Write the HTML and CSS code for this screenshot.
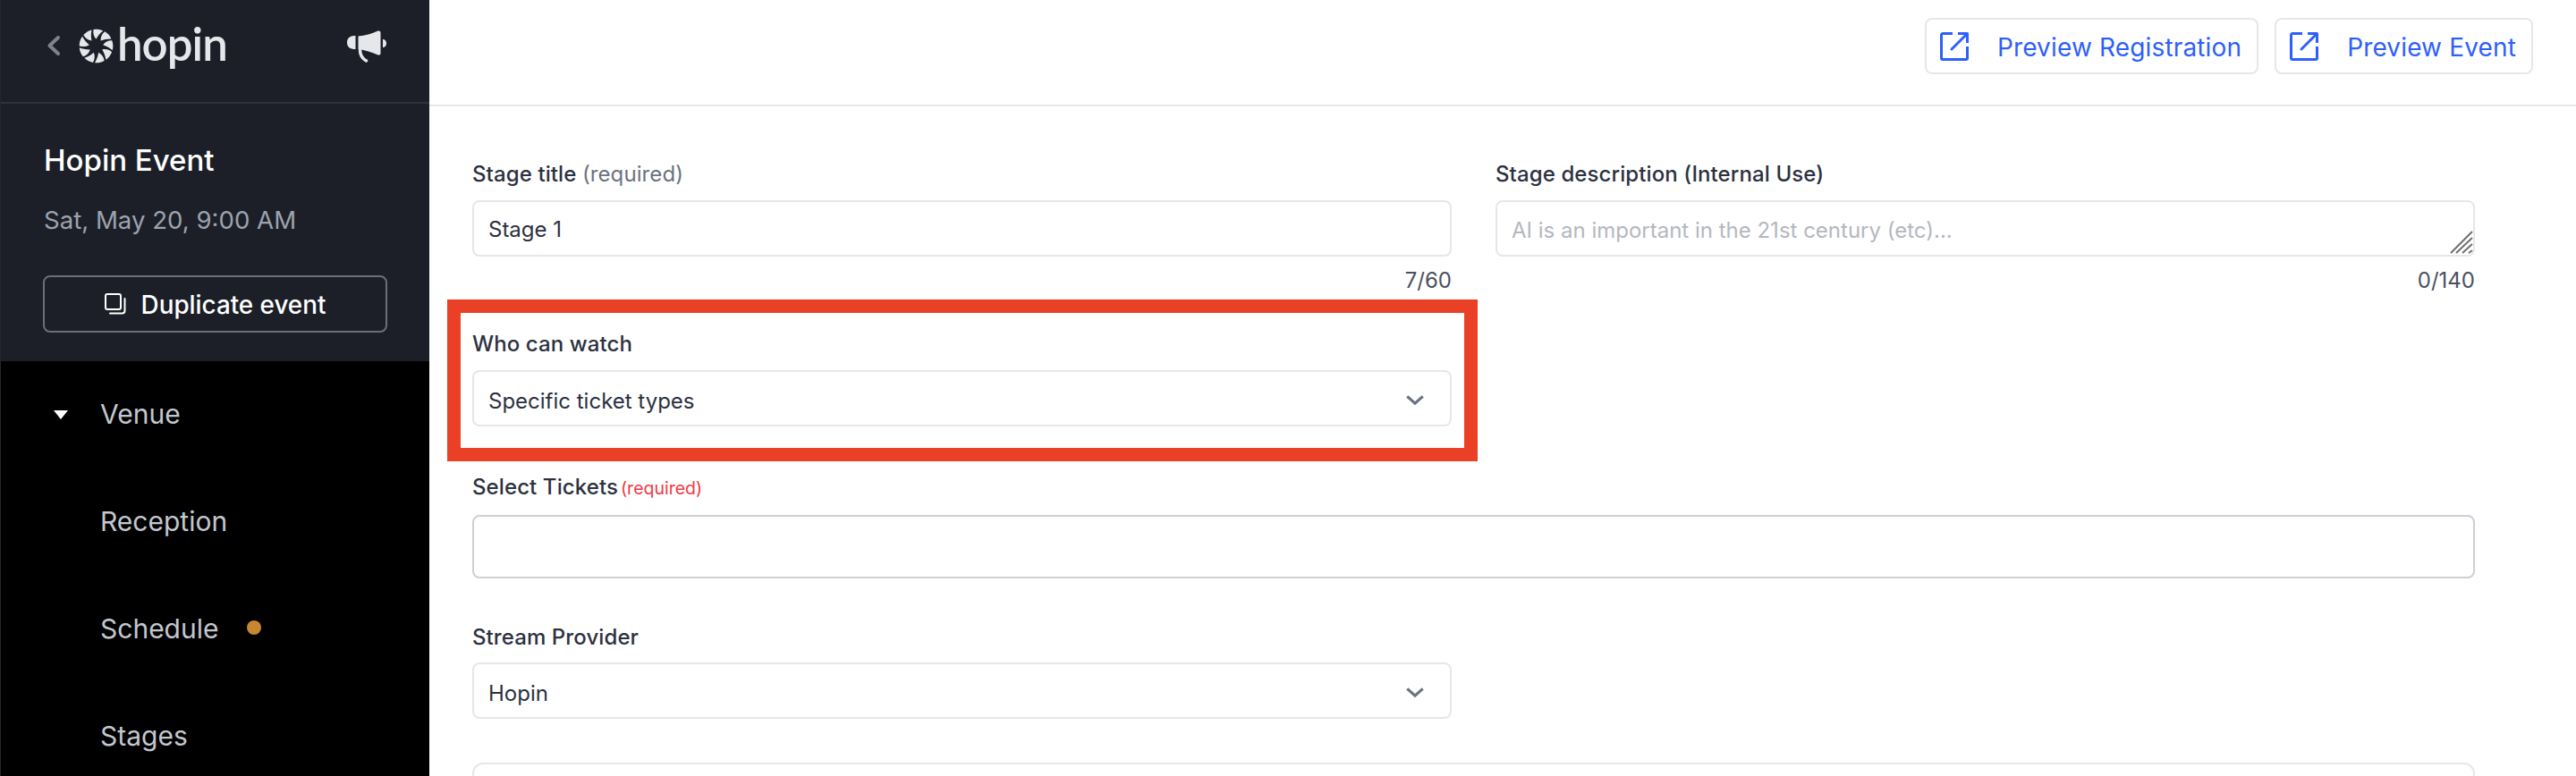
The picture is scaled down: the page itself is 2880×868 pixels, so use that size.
FILE: index.html
```html
<!DOCTYPE html>
<html lang="en">
<head>
<meta charset="utf-8">
<title>Hopin Event - Stage</title>
<link rel="stylesheet" href="styles.css">
</head>
<body>
<div class="app">
  <aside class="sidebar">
    <div class="sidebar-head">
      <div class="brand">
        <svg class="back" viewBox="0 0 16 24" width="16" height="24"><path d="M13 3 3.5 12 13 21" fill="none" stroke="#7f828e" stroke-width="4" stroke-linecap="round" stroke-linejoin="round"/></svg>
        <svg class="swirl" viewBox="0 0 40 40" width="39" height="39">
          <defs><path id="blade" d="M20 12C17.300 9 16 5 17 .9 21 .3 24.800.8 28 2.500 25 4.800 22 8.200 20 12Z"/></defs>
          <g fill="#e5e7eb">
            <use href="#blade"/>
            <use href="#blade" transform="rotate(40 20 20)"/>
            <use href="#blade" transform="rotate(80 20 20)"/>
            <use href="#blade" transform="rotate(120 20 20)"/>
            <use href="#blade" transform="rotate(160 20 20)"/>
            <use href="#blade" transform="rotate(200 20 20)"/>
            <use href="#blade" transform="rotate(240 20 20)"/>
            <use href="#blade" transform="rotate(280 20 20)"/>
            <use href="#blade" transform="rotate(320 20 20)"/>
          </g>
        </svg>
        <span class="wordmark">hopin</span>
        <svg class="horn" viewBox="0 0 44 36" width="44" height="36" fill="#e5e7eb">
          <path d="M9.500 6C3 6 0 8.500 0 13.500S3 21 9.500 21Z"/>
          <path d="M12.500 6.500C20 6 28 3.500 34 .8 36 0 37.500 .8 37.500 2.500V25.500C37.500 27.500 36 28 34 27.200 28 24.500 20 22 12.500 21Z"/>
          <path d="M40 10C43 10 44 12.500 44 14.500S43 19 40 19Z"/>
          <path d="M14.500 22C14.500 28 18 32 21.500 34" fill="none" stroke="#e5e7eb" stroke-width="3.500" stroke-linecap="round"/>
        </svg>
      </div>
      <div class="event">
        <div class="event-name">Hopin Event</div>
        <div class="event-date">Sat, May 20, 9:00 AM</div>
        <div class="dup-btn">
          <svg viewBox="0 0 24 24" width="24" height="24" fill="none" stroke="#fff" stroke-width="2"><rect x="1" y="1" width="17" height="17" rx="2"/><path d="M22.500 6V19.500A3 3 0 0 1 19.500 22.500H6" stroke-linecap="round"/></svg>
          <span>Duplicate event</span>
        </div>
      </div>
    </div>
    <nav class="nav">
      <div class="nav-row"><span class="caret"></span><span>Venue</span></div>
      <div class="nav-row"><span>Reception</span></div>
      <div class="nav-row"><span>Schedule</span><span class="dot"></span></div>
      <div class="nav-row"><span>Stages</span></div>
    </nav>
  </aside>
  <main class="main">
    <header class="topbar">
      <div class="preview-btn">
        <svg viewBox="0 0 32 32" width="32" height="32" fill="none" stroke="#2f5ffb" stroke-width="3"><path d="M14 1.500H3A1.500 1.500 0 0 0 1.500 3V29A1.500 1.500 0 0 0 3 30.500H29A1.500 1.500 0 0 0 30.500 29V16M20 1.500H30.500V12" stroke-linejoin="round"/><path d="M29.500 2.500 13 19" stroke-linecap="round"/></svg>
        <span>Preview Registration</span>
      </div>
      <div class="preview-btn">
        <svg viewBox="0 0 32 32" width="32" height="32" fill="none" stroke="#2f5ffb" stroke-width="3"><path d="M14 1.500H3A1.500 1.500 0 0 0 1.500 3V29A1.500 1.500 0 0 0 3 30.500H29A1.500 1.500 0 0 0 30.500 29V16M20 1.500H30.500V12" stroke-linejoin="round"/><path d="M29.500 2.500 13 19" stroke-linecap="round"/></svg>
        <span>Preview Event</span>
      </div>
    </header>
    <section class="form">
      <div class="field">
        <div class="label">Stage title <span class="hint">(required)</span></div>
        <div class="control">Stage 1</div>
        <div class="counter">7/60</div>
      </div>
      <div class="field">
        <div class="label">Stage description (Internal Use)</div>
        <div class="control placeholder">AI is an important in the 21st century (etc)...
          <svg class="resizer" viewBox="0 0 26 26" width="26" height="26" stroke="#6f6f6f" stroke-width="2"><path d="M1 25 25 1M7 25 25 8M14 25 25 15M21 25 25 22"/></svg>
        </div>
        <div class="counter">0/140</div>
      </div>
      <div class="field who">
        <div class="annotation"></div>
        <div class="label">Who can watch</div>
        <div class="control select">Specific ticket types
          <svg viewBox="0 0 24 14" width="22" height="13"><path d="M2.500 2.500 12 11 21.500 2.500" fill="none" stroke="#6b7280" stroke-width="3.500"/></svg>
        </div>
      </div>
      <div class="field wide tickets">
        <div class="label">Select Tickets<span class="req">(required)</span></div>
        <div class="control tall"></div>
      </div>
      <div class="field stream">
        <div class="label">Stream Provider</div>
        <div class="control select">Hopin
          <svg viewBox="0 0 24 14" width="22" height="13"><path d="M2.500 2.500 12 11 21.500 2.500" fill="none" stroke="#6b7280" stroke-width="3.500"/></svg>
        </div>
      </div>
      <div class="field wide next"><div class="panel"></div></div>
    </section>
  </main>
</div>
</body>
</html>
```
FILE: styles.css
```css
* { box-sizing: border-box; }
html, body { margin: 0; height: 100%; }
body { font-family: Inter, "Liberation Sans", sans-serif; background: #fff; overflow: hidden; }
.app { display: flex; height: 868px; overflow: hidden; }

.sidebar { width: 480px; flex: none; background: #000; border-left: 1px solid #24262e; }
.sidebar-head { background: #1c1f28; height: 404px; }
.brand { height: 116px; border-bottom: 2px solid #2e323e; display: flex; align-items: center; padding: 0 48px 12px 51px; }
.back { margin-right: 20px; }
.swirl { margin-right: 4px; }
.wordmark { font-family: Lato, Inter, sans-serif; font-weight: 600; font-size: 51px; line-height: 60px; letter-spacing: -1px; color: #e5e7eb; margin-top: -4px; }
.horn { margin-left: auto; margin-top: 2px; }
.event { padding: 42px 47px 0 47px; }
.event-name { font-size: 33px; line-height: 42px; height: 40px; font-weight: 500; color: #fff; padding-left: 1px; }
.event-date { margin-top: 30px; font-size: 27.6px; line-height: 36px; height: 34px; color: #9ca3af; padding-left: 1px; }
.dup-btn { margin-top: 46px; height: 64px; border: 2px solid #6b6e7b; border-radius: 8px; display: flex; align-items: center; justify-content: center; gap: 17px; color: #fff; font-size: 27.8px; font-weight: 500; }
.dup-btn span { padding-top: 2px; }
.nav { color: #c3c7cf; font-size: 30px; }
.nav-row { height: 120px; display: flex; align-items: center; padding: 0 0 2px 111px; position: relative; }
.caret { position: absolute; left: 59px; top: 55px; width: 0; height: 0; border-left: 8px solid transparent; border-right: 8px solid transparent; border-top: 10px solid #fff; }
.dot { width: 16px; height: 16px; border-radius: 50%; background: #c98630; margin-left: 32px; margin-top: -2px; }

.main { flex: 1; min-width: 0; }
.topbar { height: 119px; border-bottom: 2px solid #e5e7eb; display: flex; justify-content: flex-end; gap: 18px; padding: 20px 48px 0 0; }
.preview-btn { height: 63px; border: 2px solid #e5e7eb; border-radius: 8px; display: flex; align-items: center; gap: 32px; padding: 0 17px 0 15px; color: #2f5ffb; font-size: 28px; letter-spacing: .15px; }
.preview-btn span { padding-top: 2px; }
.form { display: grid; grid-template-columns: 1095px 1095px; column-gap: 49px; padding: 58px 0 0 48px; }
.label { font-size: 24px; line-height: 36px; height: 32px; font-weight: 450; letter-spacing: .1px; color: #2c3140; }
.hint { font-weight: 400; color: #6b7280; }
.req { font-size: 19.5px; font-weight: 400; color: #ef3b47; margin-left: 3px; letter-spacing: 0; }
.control { margin-top: 15px; height: 63px; border: 2px solid #e5e7eb; border-radius: 8px; padding: 2px 16px 0; display: flex; align-items: center; justify-content: space-between; font-size: 24px; color: #2c3140; position: relative; }
.placeholder { color: #b4b7bf; padding-top: 4px; }
.resizer { position: absolute; right: 0; bottom: 1px; }
.counter { margin-top: 9px; text-align: right; font-size: 24px; line-height: 36px; height: 32px; color: #4b5060; }
.who { grid-column: 1; margin-top: 39px; position: relative; }
.annotation { position: absolute; left: -28px; right: -29px; top: -32px; bottom: -39px; border: 15px solid #ea4025; pointer-events: none; }
.select { padding-top: 5px; }
.select svg { margin-right: 12px; margin-bottom: 2px; }
.wide { grid-column: 1 / span 2; }
.tickets { margin-top: 50px; }
.tall { height: 71px; margin-top: 17px; border-color: #ccd1d6; }
.stream { grid-column: 1; margin-top: 48px; }
.stream .control { margin-top: 14px; }
.next { margin-top: 49px; }
.panel { height: 120px; border: 2px solid #e5e7eb; border-radius: 12px; }
```
